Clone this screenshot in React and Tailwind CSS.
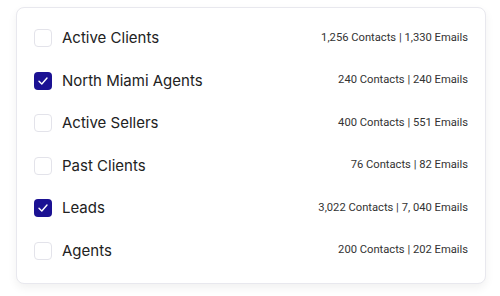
const LISTS = [
  { name: "Active Clients", stats: "1,256 Contacts | 1,330 Emails", checked: false },
  { name: "North Miami Agents", stats: "240 Contacts | 240 Emails", checked: true },
  { name: "Active Sellers", stats: "400 Contacts | 551 Emails", checked: false },
  { name: "Past Clients", stats: "76 Contacts | 82 Emails", checked: false },
  { name: "Leads", stats: "3,022 Contacts | 7, 040 Emails", checked: true },
  { name: "Agents", stats: "200 Contacts | 202 Emails", checked: false },
];

function Checkbox({ checked }) {
  if (checked) {
    return (
      <span className="flex h-[18px] w-[18px] shrink-0 items-center justify-center rounded-[4px] bg-[#1b1193]">
        <svg width="12" height="12" viewBox="0 0 12 12" fill="none">
          <path d="M2 6.2 4.8 9 10 3" stroke="white" strokeWidth="1.4" strokeLinecap="round" strokeLinejoin="round" />
        </svg>
      </span>
    );
  }
  return <span className="h-[18px] w-[18px] shrink-0 rounded-[4px] border border-[#e3e3ea] bg-white" />;
}

export default function App() {
  return (
    <div className="h-[296px] w-[500px] bg-white pl-[16px] pt-[7px]">
      <div className="w-[470px] rounded-[8px] border border-[#e8e8ee] bg-white pb-[11px] pl-[17px] pr-[17px] pt-[9px] shadow-[0_4px_10px_rgba(0,0,0,0.06)]">
        {LISTS.map((l) => (
          <div key={l.name} className="flex h-[42.5px] items-center">
            <Checkbox checked={l.checked} />
            <span className="ml-[10px] flex-1 text-[15px] text-[#222] [font-family:Inter,sans-serif]">
              {l.name}
            </span>
            <span className="text-[11.2px] text-[#333] [font-family:Roboto,sans-serif]">{l.stats}</span>
          </div>
        ))}
      </div>
    </div>
  );
}
